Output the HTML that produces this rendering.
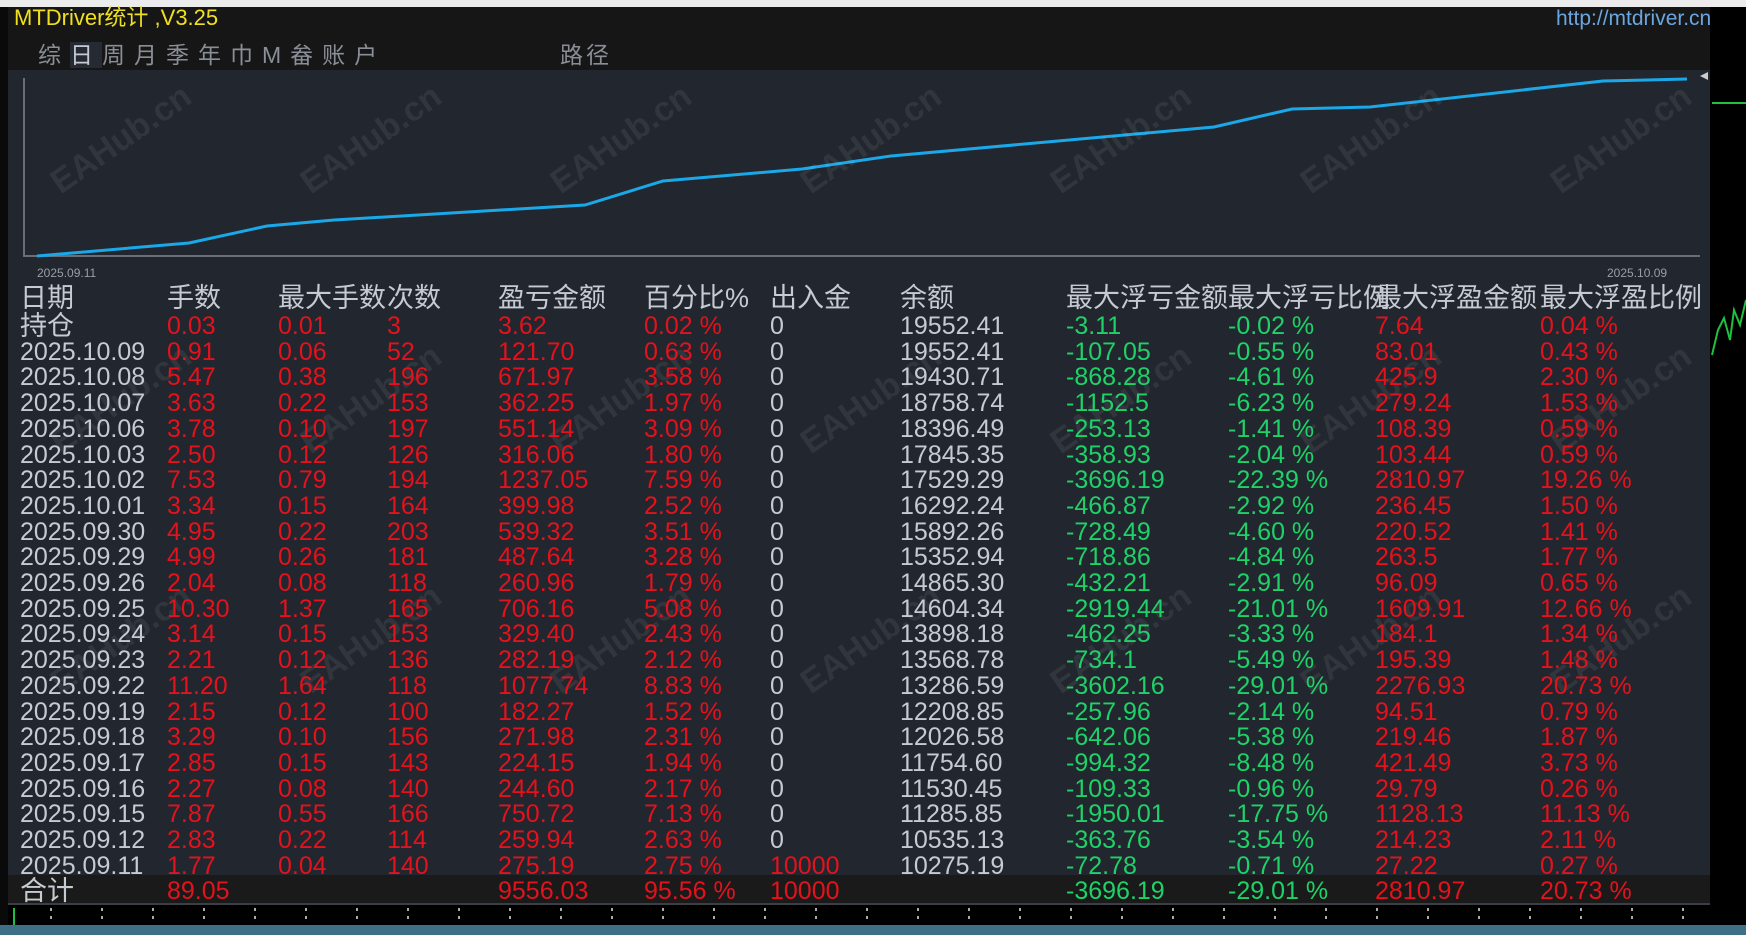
<!DOCTYPE html>
<html><head><meta charset="utf-8"><style>
*{margin:0;padding:0;box-sizing:border-box}
body{width:1746px;height:935px;background:#ececec;position:relative;overflow:hidden;font-family:"Liberation Sans Narrow","Liberation Sans","Noto Sans CJK SC",sans-serif}
.abs{position:absolute}
#win{left:8px;top:7px;width:1738px;height:918px;background:#000}
#title{left:8px;top:7px;width:1702px;height:63px;background:#161616}
#chart{left:8px;top:70px;width:1702px;height:805px;background:#22262e}
.t{position:absolute;white-space:nowrap;font-size:25px;line-height:26px}
.g{color:#c6cad2}.r{color:#e3121c}.gr{color:#1ed268}
.wm{position:absolute;color:rgba(255,255,255,0.07);font:bold 34px "Liberation Sans",sans-serif;transform:rotate(-35deg);white-space:nowrap}
</style></head><body>
<div class="abs" style="left:0;top:7px;width:8px;height:918px;background:#0a0a0a"></div>
<div id="win" class="abs"></div>
<div id="title" class="abs"></div>
<div id="chart" class="abs"></div>
<div class="abs" style="left:8px;top:875px;width:1702px;height:28px;background:#1a1a1a"></div>
<div class="abs" style="left:8px;top:903px;width:1702px;height:2px;background:#3a3e46"></div>
<div class="abs" style="left:0;top:925px;width:1746px;height:10px;background:#3d6f86"></div>
<div class="t" style="left:14px;top:5px;color:#f0e020;font-size:22px">MTDriver统计 ,V3.25</div>
<div class="t" style="left:1556px;top:6px;color:#6aa6e0;font-size:21px">http://mtdriver.cn</div>
<div class="t g" style="left:38px;top:42px;font-size:23px;color:#8a8e96;letter-spacing:9px">综<span style="background:#262a32;color:#c6cad2">日</span>周月季年巾M畚账户</div>
<div class="t" style="left:560px;top:42px;font-size:23px;color:#8a8e96;letter-spacing:3px">路径</div>
<svg class="abs" style="left:0;top:0" width="1746" height="935">
<line x1="24" y1="78" x2="24" y2="257" stroke="#6a6e76" stroke-width="2"/>
<line x1="24" y1="256" x2="1700" y2="256" stroke="#6a6e76" stroke-width="2"/>
<polyline fill="none" stroke="#1aa8e8" stroke-width="3" points="37,256 189,243 267,226 334,220 585,205 663,181 802,169 891,156 1058,141 1214,127 1292,109 1370,107 1603,81 1687,79"/>
<polygon points="1708,72 1700,76 1708,80" fill="#ccc"/>
<line x1="1712" y1="103" x2="1746" y2="103" stroke="#1ec040" stroke-width="2"/>
<polyline fill="none" stroke="#1ec040" stroke-width="2" points="1712,355 1718,330 1724,318 1730,340 1734,310 1740,325 1746,300"/>
<g stroke="#aaa" stroke-width="2" stroke-dasharray="3,5">
<line x1="14" y1="908" x2="14" y2="925" stroke="#1ec040" stroke-dasharray="none"/>
<line x1="51" y1="908" x2="51" y2="924"/><line x1="102" y1="908" x2="102" y2="924"/><line x1="153" y1="908" x2="153" y2="924"/><line x1="204" y1="908" x2="204" y2="924"/><line x1="255" y1="908" x2="255" y2="924"/><line x1="306" y1="908" x2="306" y2="924"/><line x1="357" y1="908" x2="357" y2="924"/><line x1="408" y1="908" x2="408" y2="924"/><line x1="459" y1="908" x2="459" y2="924"/><line x1="510" y1="908" x2="510" y2="924"/><line x1="561" y1="908" x2="561" y2="924"/><line x1="612" y1="908" x2="612" y2="924"/><line x1="663" y1="908" x2="663" y2="924"/><line x1="714" y1="908" x2="714" y2="924"/><line x1="765" y1="908" x2="765" y2="924"/><line x1="816" y1="908" x2="816" y2="924"/><line x1="867" y1="908" x2="867" y2="924"/><line x1="918" y1="908" x2="918" y2="924"/><line x1="969" y1="908" x2="969" y2="924"/><line x1="1020" y1="908" x2="1020" y2="924"/><line x1="1071" y1="908" x2="1071" y2="924"/><line x1="1122" y1="908" x2="1122" y2="924"/><line x1="1173" y1="908" x2="1173" y2="924"/><line x1="1224" y1="908" x2="1224" y2="924"/><line x1="1275" y1="908" x2="1275" y2="924"/><line x1="1326" y1="908" x2="1326" y2="924"/><line x1="1377" y1="908" x2="1377" y2="924"/><line x1="1428" y1="908" x2="1428" y2="924"/><line x1="1479" y1="908" x2="1479" y2="924"/><line x1="1530" y1="908" x2="1530" y2="924"/><line x1="1581" y1="908" x2="1581" y2="924"/><line x1="1632" y1="908" x2="1632" y2="924"/><line x1="1683" y1="908" x2="1683" y2="924"/>
</g>
</svg>
<div class="t g" style="left:37px;top:260px;font-size:12px;color:#9a9ea6">2025.09.11</div>
<div class="t g" style="left:1607px;top:260px;font-size:12px;color:#9a9ea6">2025.10.09</div>
<div class="wm" style="left:40px;top:120px">EAHub.cn</div>
<div class="wm" style="left:290px;top:120px">EAHub.cn</div>
<div class="wm" style="left:540px;top:120px">EAHub.cn</div>
<div class="wm" style="left:790px;top:120px">EAHub.cn</div>
<div class="wm" style="left:1040px;top:120px">EAHub.cn</div>
<div class="wm" style="left:1290px;top:120px">EAHub.cn</div>
<div class="wm" style="left:1540px;top:120px">EAHub.cn</div>
<div class="wm" style="left:40px;top:380px">EAHub.cn</div><div class="wm" style="left:290px;top:380px">EAHub.cn</div><div class="wm" style="left:540px;top:380px">EAHub.cn</div><div class="wm" style="left:790px;top:380px">EAHub.cn</div><div class="wm" style="left:1040px;top:380px">EAHub.cn</div><div class="wm" style="left:1290px;top:380px">EAHub.cn</div><div class="wm" style="left:1540px;top:380px">EAHub.cn</div>
<div class="wm" style="left:40px;top:620px">EAHub.cn</div><div class="wm" style="left:290px;top:620px">EAHub.cn</div><div class="wm" style="left:540px;top:620px">EAHub.cn</div><div class="wm" style="left:790px;top:620px">EAHub.cn</div><div class="wm" style="left:1040px;top:620px">EAHub.cn</div><div class="wm" style="left:1290px;top:620px">EAHub.cn</div><div class="wm" style="left:1540px;top:620px">EAHub.cn</div>
<div id="tbl"></div>
<script>
var cols=[20,167,278,387,498,644,770,900,1066,1228,1375,1540];
var hdr=["日期","手数","最大手数","次数","盈亏金额","百分比%","出入金","余额","最大浮亏金额","最大浮亏比例","最大浮盈金额","最大浮盈比例"];
var rows=[
["持仓","0.03","0.01","3","3.62","0.02 %","0","19552.41","-3.11","-0.02 %","7.64","0.04 %"],
["2025.10.09","0.91","0.06","52","121.70","0.63 %","0","19552.41","-107.05","-0.55 %","83.01","0.43 %"],
["2025.10.08","5.47","0.38","196","671.97","3.58 %","0","19430.71","-868.28","-4.61 %","425.9","2.30 %"],
["2025.10.07","3.63","0.22","153","362.25","1.97 %","0","18758.74","-1152.5","-6.23 %","279.24","1.53 %"],
["2025.10.06","3.78","0.10","197","551.14","3.09 %","0","18396.49","-253.13","-1.41 %","108.39","0.59 %"],
["2025.10.03","2.50","0.12","126","316.06","1.80 %","0","17845.35","-358.93","-2.04 %","103.44","0.59 %"],
["2025.10.02","7.53","0.79","194","1237.05","7.59 %","0","17529.29","-3696.19","-22.39 %","2810.97","19.26 %"],
["2025.10.01","3.34","0.15","164","399.98","2.52 %","0","16292.24","-466.87","-2.92 %","236.45","1.50 %"],
["2025.09.30","4.95","0.22","203","539.32","3.51 %","0","15892.26","-728.49","-4.60 %","220.52","1.41 %"],
["2025.09.29","4.99","0.26","181","487.64","3.28 %","0","15352.94","-718.86","-4.84 %","263.5","1.77 %"],
["2025.09.26","2.04","0.08","118","260.96","1.79 %","0","14865.30","-432.21","-2.91 %","96.09","0.65 %"],
["2025.09.25","10.30","1.37","165","706.16","5.08 %","0","14604.34","-2919.44","-21.01 %","1609.91","12.66 %"],
["2025.09.24","3.14","0.15","153","329.40","2.43 %","0","13898.18","-462.25","-3.33 %","184.1","1.34 %"],
["2025.09.23","2.21","0.12","136","282.19","2.12 %","0","13568.78","-734.1","-5.49 %","195.39","1.48 %"],
["2025.09.22","11.20","1.64","118","1077.74","8.83 %","0","13286.59","-3602.16","-29.01 %","2276.93","20.73 %"],
["2025.09.19","2.15","0.12","100","182.27","1.52 %","0","12208.85","-257.96","-2.14 %","94.51","0.79 %"],
["2025.09.18","3.29","0.10","156","271.98","2.31 %","0","12026.58","-642.06","-5.38 %","219.46","1.87 %"],
["2025.09.17","2.85","0.15","143","224.15","1.94 %","0","11754.60","-994.32","-8.48 %","421.49","3.73 %"],
["2025.09.16","2.27","0.08","140","244.60","2.17 %","0","11530.45","-109.33","-0.96 %","29.79","0.26 %"],
["2025.09.15","7.87","0.55","166","750.72","7.13 %","0","11285.85","-1950.01","-17.75 %","1128.13","11.13 %"],
["2025.09.12","2.83","0.22","114","259.94","2.63 %","0","10535.13","-363.76","-3.54 %","214.23","2.11 %"],
["2025.09.11","1.77","0.04","140","275.19","2.75 %","10000","10275.19","-72.78","-0.71 %","27.22","0.27 %"],
["合计","89.05","","","9556.03","95.56 %","10000","","-3696.19","-29.01 %","2810.97","20.73 %"]];
var h="";
hdr.forEach(function(t,i){h+='<div class="t g" style="left:'+cols[i]+'px;top:285px;font-size:27px">'+t+'</div>';});
rows.forEach(function(r,j){var y=313+j*25.7;
r.forEach(function(t,i){var c=(i==0||i==7)?"g":(i==6?(t=="0"?"g":"r"):(i==8||i==9?"gr":"r"));
var fs=(i==0&&(j==0||j==22))?';font-size:27px':'';
h+='<div class="t '+c+'" style="left:'+cols[i]+'px;top:'+y+'px'+fs+'">'+t+'</div>';});});
document.getElementById("tbl").innerHTML=h;
</script>
</body></html>
